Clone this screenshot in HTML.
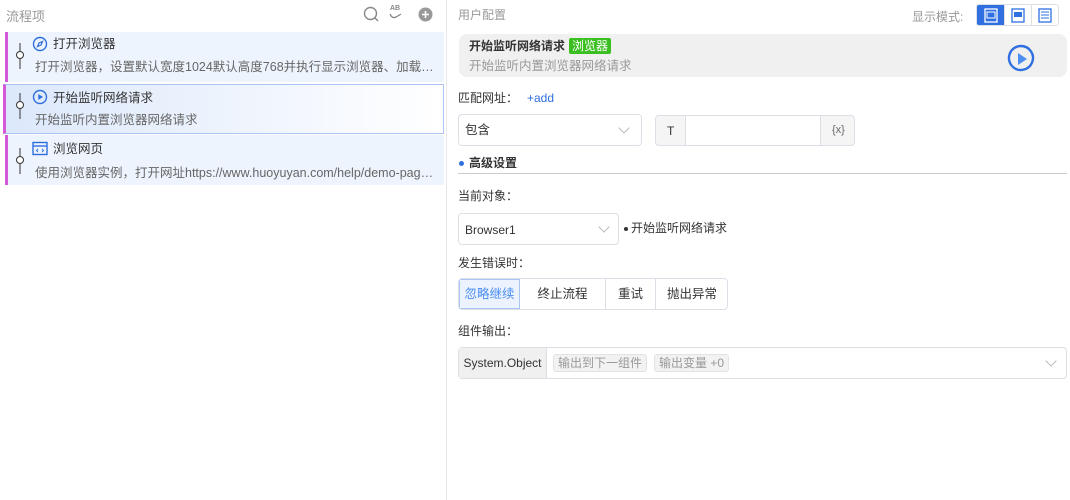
<!DOCTYPE html>
<html><head><meta charset="utf-8"><style>
*{box-sizing:border-box;margin:0;padding:0}
body{width:1070px;height:500px;background:#fff;font-family:"Liberation Sans","Noto Sans CJK SC",sans-serif;font-size:12px;color:#333;position:relative;overflow:hidden}
.a{position:absolute;white-space:nowrap}
.item{position:absolute;left:5px;width:439px;height:50px;background:#eef4fd;border-left:3px solid #d45ad8}
.item .t{position:absolute;left:45px;top:4px;font-size:12.5px;color:#333;line-height:16px}
.item .d{position:absolute;left:27px;top:27px;width:400px;overflow:hidden;text-overflow:ellipsis;font-size:12.5px;color:#666;white-space:nowrap;line-height:16px}
.item svg.node{position:absolute;left:7px;top:11px}
.item svg.ic{position:absolute;left:24px;top:4px}
.box{position:absolute;border:1px solid #dcdfe6;border-radius:4px;background:#fff}
.chev{position:absolute;width:8px;height:8px;border-right:1px solid #bbb;border-bottom:1px solid #bbb;transform:rotate(45deg)}
</style></head><body>
<div class="a" style="left:446px;top:0;width:1px;height:500px;background:#e8e8e8"></div>
<div class="a" style="left:6px;top:6px;font-size:13px;color:#999">流程项</div>
<svg class="a" style="left:363px;top:6px" width="16" height="16"><circle cx="7.5" cy="7.5" r="6" fill="none" stroke="#888" stroke-width="1.4"/><path d="M12 12l3 3" stroke="#888" stroke-width="1.4"/></svg>
<div class="a" style="left:390px;top:5px;font-size:7px;color:#888;font-weight:bold">AB</div>
<svg class="a" style="left:389px;top:12px" width="14" height="8"><path d="M1 2q2 5 6 3l5-3" fill="none" stroke="#888" stroke-width="1.3"/></svg>
<svg class="a" style="left:418px;top:7px" width="15" height="15"><circle cx="7.5" cy="7.5" r="7" fill="#999"/><path d="M4 7.5h7M7.5 4v7" stroke="#fff" stroke-width="1.6"/></svg>

<div class="item" style="top:32px"><svg class="node" width="10" height="26"><path d="M5 0v8M5 16v10" stroke="#333"/><circle cx="5" cy="12" r="3.5" fill="#fff" stroke="#333"/></svg>
<svg class="ic" width="16" height="16"><circle cx="8" cy="8" r="6.5" fill="none" stroke="#2f6fe0" stroke-width="1.4"/><path d="M10.5 5.5l-1.5 3.5-3.5 1.5 1.5-3.5z" fill="none" stroke="#2f6fe0" stroke-width="1.2"/></svg>
<div class="t">打开浏览器</div><div class="d">打开浏览器，设置默认宽度1024默认高度768并执行显示浏览器、加载图…</div></div>

<div class="item" style="top:84px;left:3px;width:441px;height:50px;background:linear-gradient(90deg,#dce8fb,#fff);border:1px solid #a9c4f5;border-left:3px solid #d45ad8"><svg class="node" width="10" height="26" style="top:8px;left:9px"><path d="M5 0v8M5 16v10" stroke="#333"/><circle cx="5" cy="12" r="3.5" fill="#fff" stroke="#333"/></svg>
<svg class="ic" width="16" height="16" style="top:4px;left:26px"><circle cx="8" cy="8" r="6.5" fill="none" stroke="#2f6fe0" stroke-width="1.4"/><path d="M6.3 5v6l4.7-3z" fill="#2f6fe0"/></svg>
<div class="t" style="top:5px;left:47px">开始监听网络请求</div><div class="d" style="top:27px;left:29px">开始监听内置浏览器网络请求</div></div>

<div class="item" style="top:135px"><svg class="node" width="10" height="26" style="top:13px"><path d="M5 0v8M5 16v10" stroke="#333"/><circle cx="5" cy="12" r="3.5" fill="#fff" stroke="#333"/></svg>
<svg class="ic" width="16" height="16" style="top:6px"><rect x="1" y="1.5" width="14" height="12" fill="none" stroke="#2f6fe0" stroke-width="1.4"/><path d="M1 5h14" stroke="#2f6fe0" stroke-width="1.4"/><path d="M6 8l-1.5 1.5L6 11M10 8l1.5 1.5L10 11" fill="none" stroke="#2f6fe0"/></svg>
<div class="t" style="top:6px">浏览网页</div><div class="d" style="top:30px">使用浏览器实例，打开网址https://www.huoyuyan.com/help/demo-pages…</div></div>

<div class="a" style="left:458px;top:6px;font-size:12px;color:#999">用户配置</div>
<div class="a" style="left:912px;top:8px;font-size:12px;color:#999">显示模式:</div>
<div class="a" style="left:976px;top:4px;width:83px;height:22px;border:1px solid #dcdfe6;border-radius:3px;overflow:hidden">
<div class="a" style="left:0;top:0;width:27px;height:22px;background:#2f6fe0"></div>
<div class="a" style="left:27px;top:0;width:1px;height:22px;background:#dcdfe6"></div>
<div class="a" style="left:54px;top:0;width:1px;height:22px;background:#dcdfe6"></div>
<svg class="a" style="left:7px;top:3px" width="14" height="15"><rect x="1" y="1" width="12" height="13" fill="none" stroke="#fff" stroke-width="1.3"/><rect x="3" y="4" width="8" height="6" fill="none" stroke="#fff"/></svg>
<svg class="a" style="left:34px;top:3px" width="14" height="15"><rect x="1" y="1" width="12" height="13" fill="none" stroke="#2f6fe0" stroke-width="1.3"/><rect x="3" y="4" width="8" height="5" fill="#2f6fe0"/></svg>
<svg class="a" style="left:61px;top:3px" width="14" height="15"><rect x="1" y="1" width="12" height="13" fill="none" stroke="#2f6fe0" stroke-width="1.3"/><path d="M3 4h8M3 7h8M3 10h8" stroke="#2f6fe0"/></svg>
</div>

<div class="a" style="left:459px;top:34px;width:608px;height:43px;background:#f0f0f0;border-radius:8px"></div>
<div class="a" style="left:469px;top:38px;font-size:12px;font-weight:bold;color:#333;line-height:16px">开始监听网络请求</div>
<div class="a" style="left:569px;top:38px;height:16px;padding:0 3px;background:#3bbf20;color:#fff;font-size:12px;line-height:16px;border-radius:2px">浏览器</div>
<div class="a" style="left:469px;top:58px;font-size:12.5px;color:#999;line-height:16px">开始监听内置浏览器网络请求</div>
<svg class="a" style="left:1006px;top:43px" width="30" height="32"><path d="M15 3a12 12 0 1 1-9 20" fill="none" stroke="#2f6fe0" stroke-width="2.4"/><path d="M6 23A12 12 0 0 1 15 3" fill="none" stroke="#2f6fe0" stroke-width="2.4" stroke-dasharray="30 4"/><path d="M12 10v12l9-6z" fill="#4d8ef0"/></svg>

<div class="a" style="left:458px;top:90px;font-size:12px;color:#333;line-height:16px">匹配网址：</div>
<div class="a" style="left:527px;top:90px;font-size:12px;color:#2f6fe0;line-height:16px">+add</div>
<div class="box" style="left:458px;top:114px;width:184px;height:32px"><div class="a" style="left:6px;top:7px;font-size:12.5px;line-height:16px">包含</div><div class="chev" style="left:161px;top:9px"></div></div>
<div class="box" style="left:655px;top:115px;width:200px;height:31px;background:#f5f5f5"><div class="a" style="left:11px;top:7px;line-height:16px">T</div><div class="a" style="left:29px;top:0;width:136px;height:29px;background:#fff;border-left:1px solid #dcdfe6;border-right:1px solid #dcdfe6"></div><div class="a" style="left:176px;top:8px;font-size:11px;color:#666">{x}</div></div>
<div class="a" style="left:459px;top:161px;width:5px;height:5px;border-radius:50%;background:#2f6fe0"></div>
<div class="a" style="left:469px;top:155px;font-size:12px;font-weight:bold;color:#333;line-height:16px">高级设置</div>
<div class="a" style="left:458px;top:173px;width:609px;height:1px;background:#ccc"></div>

<div class="a" style="left:458px;top:188px;color:#333;line-height:16px">当前对象：</div>
<div class="box" style="left:458px;top:213px;width:161px;height:32px"><div class="a" style="left:6px;top:8px;font-size:12px;line-height:16px">Browser1</div><div class="chev" style="left:141px;top:9px"></div></div>
<div class="a" style="left:624px;top:227px;width:4px;height:4px;border-radius:50%;background:#333"></div>
<div class="a" style="left:631px;top:220px;color:#333;line-height:16px">开始监听网络请求</div>

<div class="a" style="left:458px;top:255px;color:#333;line-height:16px">发生错误时：</div>
<div class="a" style="left:458px;top:278px;width:270px;height:32px;border:1px solid #dcdfe6;border-radius:4px;overflow:hidden;font-size:12.5px">
<div class="a" style="left:0;top:0;width:61px;height:30px;background:#ecf3ff;border:1px solid #a9c4f5;color:#4d8ef0;text-align:center;line-height:28px">忽略继续</div>
<div class="a" style="left:61px;top:0;width:86px;height:30px;border-right:1px solid #dcdfe6;text-align:center;line-height:30px">终止流程</div>
<div class="a" style="left:147px;top:0;width:50px;height:30px;border-right:1px solid #dcdfe6;text-align:center;line-height:30px">重试</div>
<div class="a" style="left:197px;top:0;width:72px;height:30px;text-align:center;line-height:30px">抛出异常</div></div>

<div class="a" style="left:458px;top:323px;color:#333;line-height:16px">组件输出：</div>
<div class="box" style="left:458px;top:347px;width:609px;height:32px">
<div class="a" style="left:0;top:0;width:88px;height:30px;background:#f0f0f0;border-right:1px solid #dcdfe6;text-align:center;line-height:30px;font-size:12px">System.Object</div>
<div class="a" style="left:94px;top:6px;height:18px;padding:0 4px;background:#f2f2f2;border:1px solid #e3e3e3;border-radius:3px;color:#999;line-height:16px">输出到下一组件</div>
<div class="a" style="left:195px;top:6px;height:18px;padding:0 4px;background:#f2f2f2;border:1px solid #e3e3e3;border-radius:3px;color:#999;line-height:16px">输出变量 +0</div>
<div class="chev" style="left:588px;top:9px"></div></div>
</body></html>
